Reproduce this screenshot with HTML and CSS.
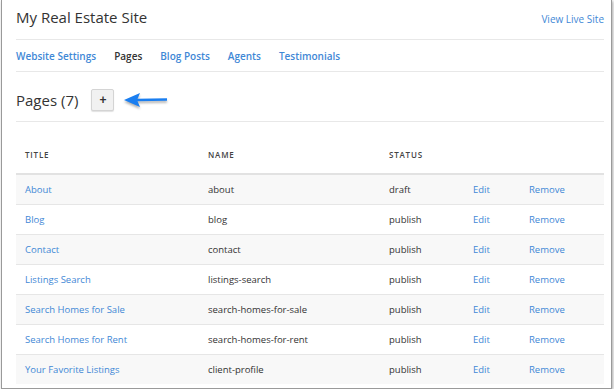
FILE: index.html
```html
<!DOCTYPE html>
<html lang="en">
<head>
    <meta charset="UTF-8">
    <meta name="viewport" content="width=device-width, initial-scale=1.0">
    <title>My Real Estate Site - Pages</title>
    <link rel="stylesheet" href="styles.css">
</head>
<body>
    <div class="window">
        <header class="site-bar">
            <h1 class="site-name">My Real Estate Site</h1>
            <a class="live-link" href="#">View Live Site</a>
        </header>

        <nav class="tabs">
            <a href="#">Website Settings</a>
            <a href="#" class="active">Pages</a>
            <a href="#">Blog Posts</a>
            <a href="#">Agents</a>
            <a href="#">Testimonials</a>
        </nav>

        <section class="pages-head">
            <h2>Pages (7)</h2>
            <button class="btn-add">+</button>
            <svg class="pointer" width="46" height="20" viewBox="0 0 46 20">
                <path d="M14 8.7 L44 8.3 L44 10.7 L14 11.2 Z" fill="#1a7ef0"/>
                <path d="M1 10 L17 3 L14 10 L17 17 Z" fill="#1a7ef0"/>
            </svg>
        </section>

        <table class="pages-table">
            <thead>
                <tr>
                    <th class="col-title">Title</th>
                    <th class="col-name">Name</th>
                    <th class="col-status">Status</th>
                    <th class="col-edit"></th>
                    <th></th>
                </tr>
            </thead>
            <tbody>
                <tr><td><a href="#">About</a></td><td>about</td><td>draft</td><td><a href="#">Edit</a></td><td><a href="#">Remove</a></td></tr>
                <tr><td><a href="#">Blog</a></td><td>blog</td><td>publish</td><td><a href="#">Edit</a></td><td><a href="#">Remove</a></td></tr>
                <tr><td><a href="#">Contact</a></td><td>contact</td><td>publish</td><td><a href="#">Edit</a></td><td><a href="#">Remove</a></td></tr>
                <tr><td><a href="#">Listings Search</a></td><td>listings-search</td><td>publish</td><td><a href="#">Edit</a></td><td><a href="#">Remove</a></td></tr>
                <tr><td><a href="#">Search Homes for Sale</a></td><td>search-homes-for-sale</td><td>publish</td><td><a href="#">Edit</a></td><td><a href="#">Remove</a></td></tr>
                <tr><td><a href="#">Search Homes for Rent</a></td><td>search-homes-for-rent</td><td>publish</td><td><a href="#">Edit</a></td><td><a href="#">Remove</a></td></tr>
                <tr><td><a href="#">Your Favorite Listings</a></td><td>client-profile</td><td>publish</td><td><a href="#">Edit</a></td><td><a href="#">Remove</a></td></tr>
            </tbody>
        </table>
    </div>
</body>
</html>
```

FILE: styles.css
```css
:root {
    --link-color: #3f88d6;
    --text-color: #333;
    --rule-color: #e8e8e8;
}

* {
    margin: 0;
    padding: 0;
    box-sizing: border-box;
}

body {
    font-family: 'Open Sans', 'Liberation Sans', sans-serif;
    color: var(--text-color);
    background-color: #fff;
}

a {
    color: var(--link-color);
    text-decoration: none;
}

.window {
    width: 611px;
    height: 389px;
    margin-left: 1px;
    padding: 0 7px 0 14px;
    border: 1px solid #9a9a9a;
    border-top: none;
    background-color: #fff;
    box-shadow: 1px 1px 3px rgba(0, 0, 0, 0.35);
}

.site-bar {
    display: flex;
    justify-content: space-between;
    align-items: center;
    height: 40px;
    padding-bottom: 5px;
    border-bottom: 1px solid var(--rule-color);
}

.site-name {
    font-size: 15px;
    font-weight: normal;
    color: #333;
}

.live-link {
    font-size: 10px;
    margin-top: 4px;
}

.tabs {
    display: flex;
    align-items: center;
    gap: 18px;
    height: 32px;
    border-bottom: 1px solid var(--rule-color);
}

.tabs a {
    font-size: 10px;
    font-weight: 600;
}

.tabs a.active {
    color: #333;
}

.pages-head {
    display: flex;
    align-items: center;
    height: 50px;
    padding-top: 6px;
    border-bottom: 1px solid var(--rule-color);
}

.pages-head h2 {
    font-size: 15px;
    font-weight: normal;
    margin-right: 13px;
}

.btn-add {
    width: 23px;
    height: 22px;
    border: 1px solid #d4d4d4;
    border-radius: 2px;
    background-color: #f1f1f1;
    box-shadow: 0 1px 1px rgba(0, 0, 0, 0.12);
    font-family: 'Liberation Sans', sans-serif;
    font-size: 12px;
    font-weight: bold;
    color: #333;
    cursor: pointer;
}

.pointer {
    margin-left: 9px;
    filter: drop-shadow(0 2px 1px rgba(0, 0, 0, 0.3));
}

.pages-table {
    width: 100%;
    margin-top: 17px;
    border-collapse: collapse;
    font-size: 9.5px;
}

.pages-table th {
    text-align: left;
    font-size: 8px;
    font-weight: 600;
    letter-spacing: 0.8px;
    text-transform: uppercase;
    color: #444;
    padding: 10px 9px 13px;
    border-bottom: 2px solid #e2e2e2;
}

.pages-table td {
    height: 30px;
    padding: 0 9px;
    border-bottom: 1px solid #e6e6e6;
}

.pages-table tbody tr:nth-child(odd) {
    background-color: #f8f8f8;
}

.pages-table tbody tr:last-child td {
    border-bottom: none;
}

.col-title { width: 183px; }
.col-name { width: 181px; }
.col-status { width: 84px; }
.col-edit { width: 56px; }
```
